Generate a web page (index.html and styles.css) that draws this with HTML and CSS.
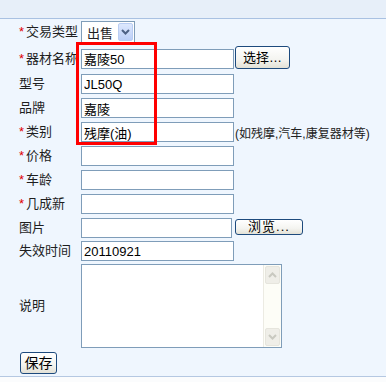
FILE: index.html
```html
<!DOCTYPE html>
<html lang="zh">
<head>
    <meta charset="UTF-8">
    <title>发布器材</title>
    <link rel="stylesheet" href="styles.css">
</head>
<body>
    <div class="topbar"></div>
    <form class="form">
        <div class="label"><span class="req">*</span>交易类型</div>
        <div class="field">
            <div class="select">
                <span class="select-text">出售</span>
                <span class="select-btn">
                    <svg width="9" height="6" viewBox="0 0 9 6"><path d="M1 1 L4.5 4.5 L8 1" fill="none" stroke="#4d6185" stroke-width="2"/></svg>
                </span>
            </div>
        </div>

        <div class="label"><span class="req">*</span>器材名称</div>
        <div class="field">
            <input class="text" type="text" value="嘉陵50">
            <button class="btn btn-pick" type="button">选择…</button>
        </div>

        <div class="label">型号</div>
        <div class="field"><input class="text" type="text" value="JL50Q"></div>

        <div class="label">品牌</div>
        <div class="field"><input class="text" type="text" value="嘉陵"></div>

        <div class="label"><span class="req">*</span>类别</div>
        <div class="field">
            <input class="text" type="text" value="残摩(油)">
            <span class="hint">(如残摩,汽车,康复器材等)</span>
        </div>

        <div class="label"><span class="req">*</span>价格</div>
        <div class="field"><input class="text" type="text"></div>

        <div class="label"><span class="req">*</span>车龄</div>
        <div class="field"><input class="text" type="text"></div>

        <div class="label"><span class="req">*</span>几成新</div>
        <div class="field"><input class="text" type="text"></div>

        <div class="label">图片</div>
        <div class="field">
            <input class="text file-text" type="text">
            <button class="btn btn-browse" type="button">浏览...</button>
        </div>

        <div class="label">失效时间</div>
        <div class="field"><input class="text" type="text" value="20110921"></div>

        <div class="label">说明</div>
        <div class="field">
            <div class="textarea">
                <div class="ta-body"></div>
                <div class="scroll">
                    <span class="scroll-btn">
                        <svg width="9" height="6" viewBox="0 0 9 6"><path d="M1 5 L4.5 1.5 L8 5" fill="none" stroke="#c9c9c0" stroke-width="2"/></svg>
                    </span>
                    <span class="scroll-track"></span>
                    <span class="scroll-btn">
                        <svg width="9" height="6" viewBox="0 0 9 6"><path d="M1 1 L4.5 4.5 L8 1" fill="none" stroke="#c9c9c0" stroke-width="2"/></svg>
                    </span>
                </div>
            </div>
        </div>

        <div class="save-row">
            <button class="btn btn-save" type="button">保存</button>
        </div>

        <div class="highlight"></div>
    </form>
</body>
</html>
```

FILE: styles.css
```css
body {
    margin: 0;
    background-color: #fbfcfd;
    font-family: "Liberation Sans", "Noto Sans CJK SC", sans-serif;
    font-size: 13px;
    color: #1e1e1e;
}
.topbar {
    height: 18px;
    background-color: #e7eff9;
    border-bottom: 1px solid #a9c1e2;
}
.form {
    position: relative;
    display: grid;
    grid-template-columns: 62px 1fr;
    grid-template-rows: 26px 27px repeat(7, 24px) 22px 88px 26px;
    padding: 0 0 0 19px;
    background-color: #eff6fe;
    border-bottom: 1px solid #b5c8e2;
    margin: 0;
}
.label {
    display: flex;
    align-items: center;
    white-space: nowrap;
    line-height: 14px;
}
.req {
    display: inline-block;
    width: 7px;
    color: #e00000;
}
.field {
    display: flex;
    align-items: center;
    gap: 1px;
    min-width: 0;
}
.text {
    box-sizing: border-box;
    width: 153px;
    height: 20px;
    margin: 0;
    padding: 0 2px;
    border: 1px solid #7f9db9;
    background-color: #fff;
    font-family: inherit;
    font-size: 13px;
    color: #000;
    outline: none;
}
.file-text {
    width: 151px;
}
.hint {
    font-size: 12px;
    white-space: nowrap;
    color: #222;
}
.select {
    box-sizing: border-box;
    width: 54px;
    height: 22px;
    border: 1px solid #7f9db9;
    background-color: #fff;
    display: flex;
    align-items: center;
    justify-content: space-between;
    padding: 1px;
}
.select-text {
    padding-left: 4px;
}
.select-btn {
    width: 15px;
    height: 18px;
    box-sizing: border-box;
    border: 1px solid #b9cdf3;
    border-radius: 2px;
    background: linear-gradient(#dde8fd, #bccff8);
    display: flex;
    align-items: center;
    justify-content: center;
}
.btn {
    box-sizing: border-box;
    margin: 0;
    padding: 0;
    border: 1px solid #1d4a7d;
    border-radius: 3px;
    background: linear-gradient(#ffffff 0%, #f4f4f0 60%, #e3e1d6 100%);
    font-family: inherit;
    font-size: 13px;
    color: #000;
    line-height: 1;
}
.btn-pick {
    width: 55px;
    height: 23px;
    margin-top: -3px;
}
.btn-browse {
    width: 68px;
    height: 16px;
    margin-left: 2px;
    margin-top: -3px;
    letter-spacing: 1px;
}
.btn-save {
    width: 37px;
    height: 22px;
    font-size: 14px;
}
.save-row {
    grid-column: 1 / 3;
    display: flex;
    align-items: center;
    padding-left: 1px;
}
.textarea {
    box-sizing: border-box;
    width: 201px;
    height: 84px;
    border: 1px solid #7f9db9;
    background-color: #fff;
    display: flex;
}
.ta-body {
    flex: 1;
}
.scroll {
    width: 17px;
    display: flex;
    flex-direction: column;
    background-color: #fdfdf7;
    border-left: 1px solid #ecebe3;
}
.scroll-btn {
    height: 16px;
    margin: 1px;
    border: 1px solid #e6e5dd;
    border-radius: 2px;
    background-color: #efeee8;
    display: flex;
    align-items: center;
    justify-content: center;
}
.scroll-track {
    flex: 1;
}
.highlight {
    position: absolute;
    left: 76px;
    top: 23px;
    width: 75px;
    height: 97px;
    border: 3px solid #ff0000;
    pointer-events: none;
}
```
